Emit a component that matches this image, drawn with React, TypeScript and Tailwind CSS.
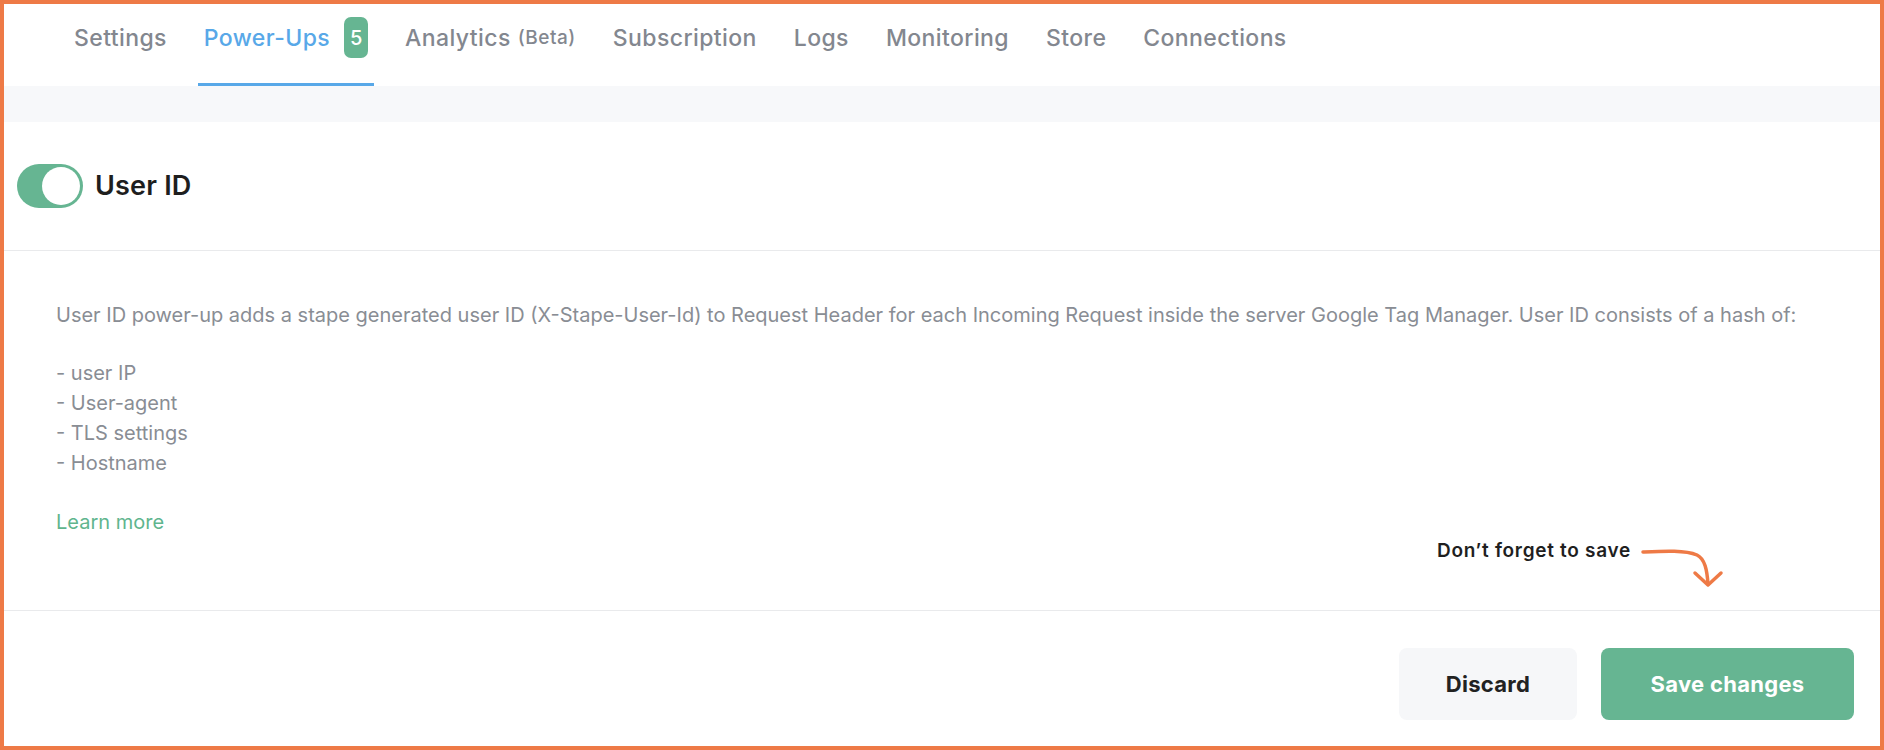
import { useState } from 'react'

interface Tab {
  label: string
  suffix?: string
  badge?: number
  active?: boolean
}

const tabs: Tab[] = [
  { label: 'Settings' },
  { label: 'Power-Ups', badge: 5, active: true },
  { label: 'Analytics', suffix: '(Beta)' },
  { label: 'Subscription' },
  { label: 'Logs' },
  { label: 'Monitoring' },
  { label: 'Store' },
  { label: 'Connections' },
]

const hashParts = ['user IP', 'User-agent', 'TLS settings', 'Hostname']

const App = () => {
  const [enabled, setEnabled] = useState(true)

  return (
    <div
      className="w-full h-[750px] flex flex-col border-4 border-[#ee7a46] bg-white overflow-hidden"
      style={{ fontFamily: 'Inter, "Noto Sans", sans-serif' }}
    >
      {/* Tabs */}
      <nav className="flex h-[82px] shrink-0 pl-[64px] gap-[25px]">
        {tabs.map((tab) => (
          <div
            key={tab.label}
            className={
              'relative flex items-start px-[6px] pt-[19px] text-[23px] leading-[30px] font-medium tracking-[0.4px] cursor-pointer ' +
              (tab.active ? 'text-[#58a8e8]' : 'text-[#83878f]')
            }
          >
            <span>{tab.label}</span>
            {tab.suffix && (
              <span className="ml-[7px] text-[19px] leading-[30px] font-medium tracking-[0.5px]">{tab.suffix}</span>
            )}
            {tab.badge !== undefined && (
              <span className="ml-[14px] -mt-[6px] flex h-[41px] w-[24px] items-center justify-center rounded-[7px] bg-[#66b592] text-[20px] font-medium tracking-normal text-white">
                {tab.badge}
              </span>
            )}
            {tab.active && <span className="absolute bottom-0 left-0 right-0 h-[3px] bg-[#58a8e8]" />}
          </div>
        ))}
      </nav>

      <div className="h-[36px] shrink-0 bg-[#f7f8fa]" />

      {/* Power-up header */}
      <div className="flex h-[129px] shrink-0 items-center gap-[12px] pl-[13px] border-b border-[#e9eaec]">
        <button
          onClick={() => setEnabled(!enabled)}
          className={
            'flex h-[44px] w-[66px] items-center rounded-full p-[3px] transition-colors ' +
            (enabled ? 'justify-end bg-[#66b592]' : 'justify-start bg-[#d5d8dd]')
          }
        >
          <span className="block h-[38px] w-[38px] rounded-full bg-white" />
        </button>
        <h2 className="text-[27px] font-semibold tracking-[0.2px] text-[#1e1e1e]">User ID</h2>
      </div>

      {/* Description */}
      <div className="relative h-[360px] shrink-0 pl-[52px] pt-[49px] border-b border-[#e9eaec] text-[20px] leading-[30px] text-[#898d94]">
        <p>
          User ID power-up adds a stape generated user ID (X-Stape-User-Id) to Request Header for each Incoming Request inside the server Google Tag Manager. User ID consists of a hash of:
        </p>
        <ul className="mt-[28px]">
          {hashParts.map((part) => (
            <li key={part}>- {part}</li>
          ))}
        </ul>
        <a href="#" className="mt-[29px] inline-block text-[#5fb58e]">
          Learn more
        </a>

        {/* Save reminder */}
        <span className="absolute left-[1433px] top-[288px] text-[19px] leading-[24px] font-semibold tracking-[0.7px] text-[#1f1f1f]">
          Don’t forget to save
        </span>
        <svg
          className="absolute left-[1635px] top-[295px]"
          width="88"
          height="46"
          viewBox="0 0 88 46"
          fill="none"
          stroke="#ee7a46"
          strokeWidth="3.5"
          strokeLinecap="round"
          strokeLinejoin="round"
        >
          <path d="M4 6 C 26 5, 46 4, 58 9 C 66 13, 68 24, 69 38" />
          <path d="M56 27 L69 39 L82 27" />
        </svg>
      </div>

      {/* Footer */}
      <div className="flex flex-1 items-start justify-end gap-[24px] pt-[37px] pr-[26px]">
        <button className="h-[72px] w-[178px] rounded-[8px] bg-[#f6f7f9] text-[22px] font-bold tracking-[0.3px] text-[#222222]">
          Discard
        </button>
        <button className="h-[72px] w-[253px] rounded-[8px] bg-[#66b592] text-[22px] font-bold tracking-[0.3px] text-white">
          Save changes
        </button>
      </div>
    </div>
  )
}

export default App
